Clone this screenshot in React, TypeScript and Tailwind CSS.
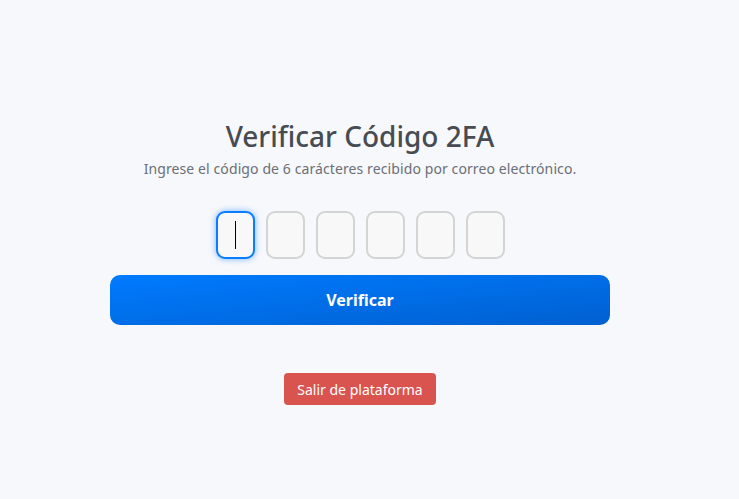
export default function App() {
  const boxes = [0, 1, 2, 3, 4, 5];
  return (
    <div
      className="min-h-[499px] w-full bg-[#f7f8fc]"
      style={{ fontFamily: '"Noto Sans", "Open Sans", sans-serif' }}
    >
      <div className="flex w-[720px] flex-col items-center pt-[118px]">
        <h1 className="text-[28px] leading-[36px] font-medium text-[#474b52]">
          Verificar Código 2FA
        </h1>
        <p className="mt-[5px] text-[14px] leading-[20px] tracking-[0.1px] text-[#6b6f76]">
          Ingrese el código de 6 carácteres recibido por correo electrónico.
        </p>
        <div className="mt-[32px] flex gap-[11px]">
          {boxes.map((i) => (
            <div
              key={i}
              className={
                i === 0
                  ? "flex h-[48px] w-[39px] items-center justify-center rounded-[9px] border-2 border-[#0a7cff] bg-[#f8f8f8] shadow-[0_0_6px_rgba(0,123,255,0.55)]"
                  : "flex h-[48px] w-[39px] items-center justify-center rounded-[9px] border-2 border-[#d4d4d4] bg-[#f8f8f8]"
              }
            >
              {i === 0 && <span className="h-[28px] w-px bg-black" />}
            </div>
          ))}
        </div>
        <button className="mt-[16px] flex h-[50px] w-[500px] items-center justify-center rounded-[10px] bg-gradient-to-br from-[#007bff] to-[#0060d0] text-[16px] font-bold text-white">
          Verificar
        </button>
        <button className="mt-[48px] flex h-[32px] w-[152px] items-center justify-center rounded-[4px] bg-[#d9534f] text-[14px] text-white">
          Salir de plataforma
        </button>
      </div>
    </div>
  );
}
